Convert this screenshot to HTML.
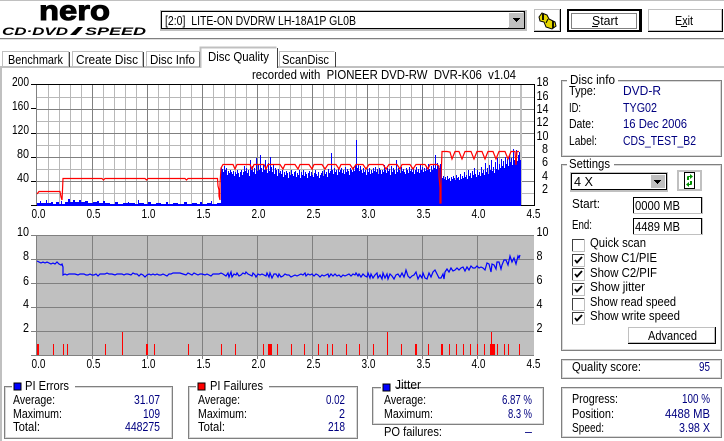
<!DOCTYPE html>
<html><head><meta charset="utf-8"><style>
html,body{margin:0;padding:0;background:#fff;width:724px;height:441px;overflow:hidden}
svg{display:block}
text{font-family:"Liberation Sans","IPAGothic",sans-serif;font-size:12.5px;fill:#000}
.v{fill:#000080}
.c{shape-rendering:crispEdges}
</style></head><body>
<svg width="724" height="441" viewBox="0 0 724 441" xmlns="http://www.w3.org/2000/svg">
<g class="c">
<rect x="0" y="0" width="724" height="1" fill="#c0c0c0"/>
<rect x="0" y="38" width="724" height="1" fill="#808080"/>
<rect x="0" y="39" width="724" height="1" fill="#e0e0e0"/>
<rect x="0" y="66" width="724" height="2" fill="#c0c0c0"/>
<rect x="0" y="66" width="2" height="375" fill="#c0c0c0"/>
</g>
<!-- logo -->
<text x="39" y="20" textLength="71" lengthAdjust="spacingAndGlyphs" style="font-size:28px;font-weight:bold;stroke:#000;stroke-width:1">nero</text>
<text x="2" y="35" textLength="66" lengthAdjust="spacingAndGlyphs" style="font-size:11px;font-weight:bold;font-style:italic">CD·DVD</text>
<path d="M70 35l8-8h5l-7 8z" fill="#000"/>
<text x="85" y="35" textLength="61" lengthAdjust="spacingAndGlyphs" style="font-size:11px;font-weight:bold;font-style:italic">SPEED</text>
<!-- drive combo -->
<g class="c">
<rect x="160" y="10" width="367" height="21" fill="#c0c0c0"/>
<rect x="161" y="11" width="364" height="18" fill="#000"/>
<rect x="162" y="12" width="362" height="16" fill="#fff"/>
<rect x="508" y="12" width="16" height="16" fill="#c0c0c0"/>
<rect x="508" y="12" width="15" height="15" fill="#fff"/>
<rect x="509" y="13" width="14" height="14" fill="#c0c0c0"/>
<path d="M513 18h7v1h-1v1h-1v1h-1v1h-1v-1h-1v-1h-1v-1h-1z" fill="#000"/>
</g>
<text x="165" y="25" textLength="191" lengthAdjust="spacingAndGlyphs">[2:0]&#160;&#160;LITE-ON DVDRW LH-18A1P GL0B</text>
<!-- top buttons -->
<g class="c">
<rect x="534" y="9" width="27" height="23" fill="#000"/>
<rect x="534" y="9" width="26" height="22" fill="#c0c0c0"/>
<rect x="535" y="10" width="24" height="20" fill="#fff"/>
<rect x="567" y="9" width="75" height="23" fill="#000"/>
<rect x="569" y="11" width="70" height="19" fill="#fff"/>
<rect x="648" y="9" width="75" height="23" fill="#000"/>
<rect x="648" y="9" width="74" height="22" fill="#c0c0c0"/>
<rect x="649" y="10" width="72" height="20" fill="#fff"/>
</g>
<rect x="571.5" y="13.5" width="65" height="15" fill="none" stroke="#000" stroke-width="1" stroke-dasharray="1 1" class="c"/>
<g>
<path d="M539 17l3-4 5 2 2 4 6 3 1 4-4 3-6-2-2-5-4-1z" fill="#e6d800" stroke="#000" stroke-width="1"/>
<path d="M543 14v6M553 21v7" stroke="#000" stroke-width="1.800"/>
<path d="M548 19l-2 4" stroke="#000" stroke-width="1"/>
</g>
<text x="592" y="25" textLength="26" lengthAdjust="spacingAndGlyphs">Start</text>
<rect x="592" y="26" width="6" height="1" class="c"/>
<text x="675" y="25" textLength="18" lengthAdjust="spacingAndGlyphs">Exit</text>
<rect x="681" y="26" width="6" height="1" class="c"/>
<!-- tabs -->
<g class="c" fill="none">
<path d="M2.500 67V51.500H68.500V67" stroke="#c0c0c0"/><path d="M69.500 52V67" stroke="#404040"/>
<path d="M72.500 67V51.500H142.500V67" stroke="#c0c0c0"/><path d="M143.500 52V67" stroke="#404040"/>
<path d="M146.500 67V51.500H199.500V67" stroke="#c0c0c0"/><path d="M199.500 52V67" stroke="#404040"/>
<rect x="201" y="48" width="76" height="21" fill="#fff" stroke="none"/>
<path d="M200.500 68V47.500H276.500" stroke="#c0c0c0" stroke-width="2"/><path d="M277.500 48V68" stroke="#404040"/>
<path d="M279.500 66V51.500H334.500" stroke="#c0c0c0"/><path d="M335.500 52V67" stroke="#404040"/>
</g>
<text x="8" y="64" textLength="55" lengthAdjust="spacingAndGlyphs">Benchmark</text>
<text x="76" y="64" textLength="62" lengthAdjust="spacingAndGlyphs">Create Disc</text>
<text x="150" y="64" textLength="45" lengthAdjust="spacingAndGlyphs">Disc Info</text>
<text x="208" y="61" textLength="61" lengthAdjust="spacingAndGlyphs">Disc Quality</text>
<text x="282" y="64" textLength="47" lengthAdjust="spacingAndGlyphs">ScanDisc</text>
<text x="252" y="79" textLength="264" lengthAdjust="spacingAndGlyphs">recorded with&#160;&#160;PIONEER DVD-RW&#160;&#160;DVR-K06&#160;&#160;v1.04</text>

<!-- chart 1 grid -->
<g class="c" fill="none">
<path d="M48.500 85V206M59.500 85V206M70.500 85V206M81.500 85V206M103.500 85V206M114.500 85V206M125.500 85V206M136.500 85V206M158.500 85V206M169.500 85V206M180.500 85V206M191.500 85V206M213.500 85V206M224.500 85V206M235.500 85V206M246.500 85V206M268.500 85V206M279.500 85V206M290.500 85V206M301.500 85V206M323.500 85V206M334.500 85V206M345.500 85V206M356.500 85V206M378.500 85V206M389.500 85V206M400.500 85V206M411.500 85V206M433.500 85V206M444.500 85V206M455.500 85V206M466.500 85V206M488.500 85V206M499.500 85V206M510.500 85V206M521.500 85V206M36 97.500H534M36 121.500H534M36 145.500H534M36 169.500H534M36 193.500H534" stroke="#b8b8b8"/>
<path d="M92.500 85V206M147.500 85V206M202.500 85V206M257.500 85V206M312.500 85V206M367.500 85V206M422.500 85V206M477.500 85V206M36 109.500H534M36 133.500H534M36 157.500H534M36 181.500H534" stroke="#808080"/>
<rect x="520" y="85" width="2" height="121" fill="#c0c0c0" stroke="none"/>
<path d="M36.500 85V206" stroke="#808080"/>
<path d="M36 84.500H534.500V206" stroke="#000"/>
<path d="M36 205.500H534" stroke="#000"/>
<path d="M31 84.500h5M31 108.500h5M31 133.500h5M31 157.500h5M31 181.500h5M31 205.500h5" stroke="#000"/>
</g>
<!-- blue low region -->
<path class="c" fill="#0000ff" d="M37 206V203h3V201h1V203h5V200h1V203h4V202h2V204h3V202h3V204h2V201h1V204h3V202h3V199h2V202h3V200h2V202h4V200h2V202h4V201h3V203h5V202h4V201h2V203h4V201h2V203h5V204h5V202h3V204h5V203h5V202h1V203h6V204h3V200h1V203h5V204h4V202h3V204h5V203h5V204h5V202h2V204h5V203h5V204h6V202h3V204h5V203h5V204h3V202h2V204h5V203h4V201h1V204h5V203h5V202h3V206z"/>
<!-- blue high region -->
<path class="c" fill="#0000ff" d="M221 206V167h1V169h1V172h1V166h1V170h1V168h1V175h1V171h1V173h1V170h1V172h1V174h1V171h1V176h1V172h1V174h1V170h1V173h1V177h1V172h1V170h1V175h1V172h1V166h1V171h1V168h1V173h1V170h1V176h1V160h1V170h1V166h1V172h1V168h1V174h1V158h1V171h1V165h1V170h1V155h1V168h1V172h1V164h1V170h1V160h1V169h1V173h1V163h1V171h1V157h1V167h1V172h1V165h1V174h1V168h1V170h1V176h1V169h1V173h1V171h1V174h1V170h1V177h1V172h1V175h1V171h1V173h1V178h1V172h1V175h1V170h1V174h1V176h1V172h1V171h1V177h1V173h1V175h1V170h1V178h1V172h1V175h1V170h1V176h1V172h1V174h1V178h1V173h1V171h1V176h1V172h1V175h1V177h1V173h1V170h1V174h1V176h1V172h1V178h1V175h1V173h1V171h1V176h1V170h1V174h1V172h1V177h1V169h1V173h1V171h1V153h1V170h1V174h1V168h1V172h1V170h1V175h1V169h1V172h1V170h1V168h1V173h1V170h1V174h1V167h1V172h1V169h1V171h1V175h1V168h1V170h1V172h1V167h1V171h1V165h1V140h1V168h1V164h1V171h1V166h1V170h1V173h1V168h1V172h1V170h1V175h1V169h1V172h1V168h1V174h1V170h1V173h1V168h1V171h1V167h1V172h1V169h1V174h1V168h1V170h1V174h1V170h1V172h1V165h1V170h1V173h1V168h1V171h1V169h1V175h1V166h1V172h1V168h1V170h1V174h1V160h1V172h1V168h1V170h1V173h1V167h1V171h1V169h1V172h1V174h1V168h1V170h1V173h1V167h1V171h1V169h1V172h1V168h1V174h1V170h1V167h1V172h1V169h1V173h1V165h1V170h1V167h1V172h1V168h1V171h1V166h1V170h1V164h1V169h1V172h1V166h1V170h1V165h1V168h1V155h1V169h1V163h1V166h1V168h1V164h1V170h1V178h1V176h1V179h1V177h1V180h1V176h1V179h1V178h1V181h1V177h1V179h1V176h1V178h1V180h1V175h1V178h1V177h1V180h1V174h1V179h1V176h1V178h1V172h1V177h1V175h1V179h1V170h1V176h1V173h1V178h1V171h1V175h1V168h1V174h1V177h1V170h1V175h1V172h1V176h1V167h1V173h1V170h1V175h1V163h1V172h1V168h1V174h1V165h1V170h1V160h1V171h1V167h1V173h1V162h1V169h1V158h1V170h1V164h1V168h1V159h1V166h1V161h1V168h1V157h1V164h1V159h1V166h1V155h1V162h1V158h1V165h1V149h1V160h1V156h1V150h1V161h1V155h1V152h1V160h1V206z"/>
<!-- red line -->
<path fill="none" stroke="#ff0000" stroke-width="1.200" d="M37 194L39 191.500H60L61 197L62 200L62.500 190L63 178.500H102L103.500 180L105 178.500H145L146.500 180L148 178.500H185L186.500 180L188 178.500H217.500L218 186L219 190V196L220 200V184L221 168L223 164.500H233L235 169L237 164.500H246L248 164.500H250L252 169L254 164.500H264L266 169L268 164.500H276L278 164.500H280L283 169L285 164.500H295L298 169L300 164.500H309L312 169L314 164.500H322L325 169L328 164.500H336L339 169L341 164.500H350L353 169L356 164.500H363L366 169L369 164.500H377L380 164.500H383L386 169L389 164.500H397L400 169L402 164.500H410L413 169L416 164.500H425L428 169L430 164.500H437L439 166V176L440 188V203L441 203V180L442 151.500H447L450 152L452 159L455 151.500H459L462 159L465 151.500H471L474 159L477 151.500H482L485 159L488 151.500H493L496 159L499 151.500H505L508 159L511 151.500H515L516 165L517 151.500H519"/>
<!-- chart 2 -->
<g class="c" fill="none">
<rect x="36" y="235" width="498" height="121" fill="#c0c0c0" stroke="none"/>
<path d="M36 235.500H534M36 259.500H534M36 283.500H534M36 307.500H534M36 331.500H534M92.500 235V359M147.500 235V359M202.500 235V359M257.500 235V359M312.500 235V359M367.500 235V359M422.500 235V359M477.500 235V359M36 355.500H534" stroke="#808080"/>
<path d="M31 235.500h5M31 259.500h5M31 283.500h5M31 307.500h5M31 331.500h5M31 355.500h5" stroke="#808080"/>
<path d="M36.500 235V356" stroke="#808080"/>
<path stroke="#ff0000" stroke-width="1" d="M53.500 344V355M63.500 344V355M67.500 344V355M105.500 344V355M154.500 344V355M188.500 344V355M221.500 344V355M235.500 344V355M263.500 344V355M277.500 344V355M291.500 344V355M304.500 344V355M318.500 344V355M327.500 344V355M332.500 344V355M346.500 344V355M359.500 344V355M373.500 344V355M401.500 344V355M428.500 344V355M449.500 344V355M456.500 344V355M463.500 344V355M470.500 344V355M477.500 344V355M484.500 344V355M497.500 344V355M504.500 344V355M508.500 344V355M519.500 344V355M122.500 332V355M387.500 332V355M491.500 332V355"/>
<path fill="#ff0000" stroke="none" d="M37 344h2v11h-2zM146 344h2v11h-2zM268 344h4v11h-4zM415 344h2v11h-2zM441 344h2v11h-2zM490 344h5v11h-5z"/>
</g>
<polyline fill="none" stroke="#0000ff" stroke-width="1.200" points="37,261 39,262 41,263 43,262 45,263 47,262 49,263 51,264 53,263 55,264 57,262 59,264 61,265 62,264 63,267 63,275 65,274 67,275 69,274 72,274 75,274 78,275 80,274 82,274 84,274 86,275 88,275 90,274 92,275 94,275 96,274 98,276 100,274 102,274 105,274 107,273 109,274 112,274 115,275 117,274 119,274 122,274 124,275 126,274 128,274 131,275 133,273 135,274 137,274 139,276 141,274 143,275 145,277 147,275 149,274 151,275 153,274 155,275 157,274 159,275 161,275 163,274 165,275 167,276 169,274 171,274 173,273 176,273 180,273 183,274 186,275 188,273 190,274 192,275 194,273 196,274 198,275 200,274 202,274 205,275 207,274 209,275 211,276 213,274 215,274 217,274 219,274 221,273 223,274 226,276 228,273 229,277 231,272 232,277 234,274 236,275 237,273 239,276 241,275 243,273 245,274 246,272 248,274 250,275 252,276 253,273 255,275 256,277 258,274 260,275 262,274 264,275 266,276 267,273 269,277 270,273 272,278 274,274 276,274 278,277 279,274 281,277 283,276 285,274 287,275 289,275 291,277 293,276 295,275 297,276 299,275 301,274 303,275 305,273 306,276 308,274 310,275 312,274 314,276 316,274 318,275 320,277 322,275 324,276 326,275 328,274 329,277 331,274 333,276 335,274 337,276 339,275 341,277 343,275 345,276 347,275 349,274 351,276 353,274 355,275 356,273 358,276 359,274 361,277 363,274 365,276 367,277 368,273 370,278 371,274 373,278 375,275 377,273 378,278 380,275 382,279 383,273 385,278 387,274 388,279 390,274 392,276 394,279 396,275 398,274 400,277 402,273 404,277 405,274 406,270 408,276 410,278 412,276 414,275 416,272 418,279 420,275 422,278 423,273 425,278 427,279 429,273 431,277 433,272 435,270 437,274 439,278 441,278 443,274 444,279 445,272 447,269 449,272 451,268 453,271 455,270 457,268 459,270 461,268 463,267 465,271 467,267 469,270 471,266 473,268 475,268 477,266 479,268 481,267 483,268 485,270 487,263 489,264 491,272 492,264 494,265 496,269 497,262 499,262 501,269 502,265 504,260 506,260 508,265 510,256 512,262 514,258 516,264 518,256 519,258 520,255"/>
<!-- axis labels -->
<g text-anchor="end">
<text x="29" y="86" textLength="17" lengthAdjust="spacingAndGlyphs">200</text><text x="29" y="110" textLength="17" lengthAdjust="spacingAndGlyphs">160</text><text x="29" y="134" textLength="17" lengthAdjust="spacingAndGlyphs">120</text><text x="29" y="158" textLength="12" lengthAdjust="spacingAndGlyphs">80</text><text x="29" y="182" textLength="12" lengthAdjust="spacingAndGlyphs">40</text>
<text x="29" y="236" textLength="12" lengthAdjust="spacingAndGlyphs">10</text><text x="29" y="260" textLength="6" lengthAdjust="spacingAndGlyphs">8</text><text x="29" y="285" textLength="6" lengthAdjust="spacingAndGlyphs">6</text><text x="29" y="308" textLength="6" lengthAdjust="spacingAndGlyphs">4</text><text x="29" y="332" textLength="6" lengthAdjust="spacingAndGlyphs">2</text>
</g>
<g>
<text x="536.500" y="86" textLength="12" lengthAdjust="spacingAndGlyphs">18</text><text x="536.500" y="100" textLength="12" lengthAdjust="spacingAndGlyphs">16</text><text x="536.500" y="113" textLength="12" lengthAdjust="spacingAndGlyphs">14</text><text x="536.500" y="126" textLength="12" lengthAdjust="spacingAndGlyphs">12</text><text x="536.500" y="140" textLength="12" lengthAdjust="spacingAndGlyphs">10</text><text x="542" y="153" textLength="6" lengthAdjust="spacingAndGlyphs">8</text><text x="542" y="166" textLength="6" lengthAdjust="spacingAndGlyphs">6</text><text x="542" y="180" textLength="6" lengthAdjust="spacingAndGlyphs">4</text><text x="542" y="193" textLength="6" lengthAdjust="spacingAndGlyphs">2</text>
<text x="536.500" y="236" textLength="12" lengthAdjust="spacingAndGlyphs">10</text><text x="536.500" y="260" textLength="6" lengthAdjust="spacingAndGlyphs">8</text><text x="536.500" y="284" textLength="6" lengthAdjust="spacingAndGlyphs">6</text><text x="536.500" y="308" textLength="6" lengthAdjust="spacingAndGlyphs">4</text><text x="536.500" y="332" textLength="6" lengthAdjust="spacingAndGlyphs">2</text>
</g>
<g text-anchor="middle">
<text x="38.500" y="218" textLength="14" lengthAdjust="spacingAndGlyphs">0.0</text><text x="93.500" y="218" textLength="14" lengthAdjust="spacingAndGlyphs">0.5</text><text x="148.500" y="218" textLength="14" lengthAdjust="spacingAndGlyphs">1.0</text><text x="203.500" y="218" textLength="14" lengthAdjust="spacingAndGlyphs">1.5</text><text x="258.500" y="218" textLength="14" lengthAdjust="spacingAndGlyphs">2.0</text><text x="313.500" y="218" textLength="14" lengthAdjust="spacingAndGlyphs">2.5</text><text x="368.500" y="218" textLength="14" lengthAdjust="spacingAndGlyphs">3.0</text><text x="423.500" y="218" textLength="14" lengthAdjust="spacingAndGlyphs">3.5</text><text x="478.500" y="218" textLength="14" lengthAdjust="spacingAndGlyphs">4.0</text><text x="533.500" y="218" textLength="14" lengthAdjust="spacingAndGlyphs">4.5</text>
<text x="38.500" y="368" textLength="14" lengthAdjust="spacingAndGlyphs">0.0</text><text x="93.500" y="368" textLength="14" lengthAdjust="spacingAndGlyphs">0.5</text><text x="148.500" y="368" textLength="14" lengthAdjust="spacingAndGlyphs">1.0</text><text x="203.500" y="368" textLength="14" lengthAdjust="spacingAndGlyphs">1.5</text><text x="258.500" y="368" textLength="14" lengthAdjust="spacingAndGlyphs">2.0</text><text x="313.500" y="368" textLength="14" lengthAdjust="spacingAndGlyphs">2.5</text><text x="368.500" y="368" textLength="14" lengthAdjust="spacingAndGlyphs">3.0</text><text x="423.500" y="368" textLength="14" lengthAdjust="spacingAndGlyphs">3.5</text><text x="478.500" y="368" textLength="14" lengthAdjust="spacingAndGlyphs">4.0</text><text x="533.500" y="368" textLength="14" lengthAdjust="spacingAndGlyphs">4.5</text>
</g>
<!-- group boxes -->
<g class="c" fill="none" stroke="#808080" stroke-width="1">
<rect x="561.500" y="80.500" width="160" height="76"/><rect x="562.500" y="81.500" width="158" height="74" stroke="#d8d8d8"/>
<rect x="561.500" y="164.500" width="160" height="186"/><rect x="562.500" y="165.500" width="158" height="184" stroke="#d8d8d8"/>
<rect x="561.500" y="359.500" width="160" height="19"/><rect x="562.500" y="360.500" width="158" height="17" stroke="#d8d8d8"/>
<rect x="561.500" y="387.500" width="160" height="50"/><rect x="562.500" y="388.500" width="158" height="48" stroke="#d8d8d8"/>
<rect x="4.500" y="386.500" width="168" height="52"/><rect x="5.500" y="387.500" width="166" height="50" stroke="#d8d8d8"/>
<rect x="188.500" y="386.500" width="169" height="52"/><rect x="189.500" y="387.500" width="167" height="50" stroke="#d8d8d8"/>
<rect x="372.500" y="387.500" width="171" height="37"/><rect x="373.500" y="388.500" width="169" height="35" stroke="#d8d8d8"/>
</g>
<g class="c" fill="#fff">
<rect x="567" y="78" width="51" height="6"/><rect x="567" y="162" width="47" height="6"/>
<rect x="12" y="384" width="63" height="6"/><rect x="196" y="384" width="73" height="6"/><rect x="381" y="385" width="16" height="5"/>
</g>
<!-- disc info -->
<text x="570" y="84" textLength="45" lengthAdjust="spacingAndGlyphs">Disc info</text>
<text x="569" y="95" textLength="27" lengthAdjust="spacingAndGlyphs">Type:</text><text x="623" y="95" textLength="38" lengthAdjust="spacingAndGlyphs" class="v">DVD-R</text>
<text x="569" y="112" textLength="12" lengthAdjust="spacingAndGlyphs">ID:</text><text x="623" y="112" textLength="34" lengthAdjust="spacingAndGlyphs" class="v">TYG02</text>
<text x="569" y="128" textLength="25" lengthAdjust="spacingAndGlyphs">Date:</text><text x="623" y="128" textLength="64" lengthAdjust="spacingAndGlyphs" class="v">16 Dec 2006</text>
<text x="569" y="145" textLength="28" lengthAdjust="spacingAndGlyphs">Label:</text><text x="623" y="145" textLength="73" lengthAdjust="spacingAndGlyphs" class="v">CDS_TEST_B2</text>
<!-- settings -->
<text x="569" y="168" textLength="41" lengthAdjust="spacingAndGlyphs">Settings</text>
<g class="c">
<rect x="570" y="172" width="98" height="20" fill="#c0c0c0"/>
<rect x="571" y="173" width="96" height="17" fill="#000"/>
<rect x="572" y="174" width="94" height="15" fill="#fff"/>
<rect x="650" y="174" width="16" height="15" fill="#fff"/>
<rect x="651" y="175" width="14" height="13" fill="#c0c0c0"/>
<path d="M654 180h7v1h-1v1h-1v1h-1v1h-1v-1h-1v-1h-1v-1h-1z" fill="#000"/>
<rect x="677" y="170" width="25" height="21" fill="#c0c0c0"/>
<rect x="679" y="172" width="21" height="17" fill="#fff"/>
<rect x="684" y="172" width="11" height="17" fill="#000"/>
<rect x="685" y="173" width="9" height="15" fill="#fff"/>
</g>
<path d="M687 180v-3q0-1 1-1h2v-2l3 2.500-3 2.500v-2h-1v3zM692 181v3q0 1-1 1h-2v2l-3-2.500 3-2.500v2h1v-3z" fill="#009000"/>
<text x="574" y="186" textLength="19" lengthAdjust="spacingAndGlyphs">4 X</text>
<text x="572" y="208" textLength="28" lengthAdjust="spacingAndGlyphs">Start:</text>
<text x="572" y="229" textLength="20" lengthAdjust="spacingAndGlyphs">End:</text>
<g class="c">
<rect x="633" y="197" width="70" height="17" fill="#c0c0c0"/><rect x="633" y="197" width="69" height="16" fill="#000"/><rect x="634" y="198" width="67" height="15" fill="#fff"/>
<rect x="633" y="218" width="70" height="17" fill="#c0c0c0"/><rect x="633" y="218" width="69" height="16" fill="#000"/><rect x="634" y="219" width="67" height="15" fill="#fff"/>
</g>
<text x="635" y="210" textLength="45" lengthAdjust="spacingAndGlyphs">0000 MB</text>
<text x="635" y="231" textLength="45" lengthAdjust="spacingAndGlyphs">4489 MB</text>
<!-- checkboxes -->
<g class="c">
<rect x="572" y="239" width="13" height="13" fill="#c0c0c0"/><rect x="572" y="239" width="12" height="12" fill="#404040"/><rect x="573" y="240" width="11" height="11" fill="#fff"/>
<rect x="572" y="254" width="13" height="13" fill="#c0c0c0"/><rect x="572" y="254" width="12" height="12" fill="#404040"/><rect x="573" y="255" width="11" height="11" fill="#fff"/>
<rect x="572" y="268" width="13" height="13" fill="#c0c0c0"/><rect x="572" y="268" width="12" height="12" fill="#404040"/><rect x="573" y="269" width="11" height="11" fill="#fff"/>
<rect x="572" y="283" width="13" height="13" fill="#c0c0c0"/><rect x="572" y="283" width="12" height="12" fill="#404040"/><rect x="573" y="284" width="11" height="11" fill="#fff"/>
<rect x="572" y="298" width="13" height="13" fill="#c0c0c0"/><rect x="572" y="298" width="12" height="12" fill="#404040"/><rect x="573" y="299" width="11" height="11" fill="#fff"/>
<rect x="572" y="312" width="13" height="13" fill="#c0c0c0"/><rect x="572" y="312" width="12" height="12" fill="#404040"/><rect x="573" y="313" width="11" height="11" fill="#fff"/>
</g>
<g fill="none" stroke="#000" stroke-width="1.800">
<path d="M575 260l2 2.500 5-5.500"/><path d="M575 274l2 2.500 5-5.500"/><path d="M575 289l2 2.500 5-5.500"/><path d="M575 318l2 2.500 5-5.500"/>
</g>
<text x="590" y="247" textLength="56" lengthAdjust="spacingAndGlyphs">Quick scan</text>
<text x="590" y="262" textLength="67" lengthAdjust="spacingAndGlyphs">Show C1/PIE</text>
<text x="590" y="277" textLength="67" lengthAdjust="spacingAndGlyphs">Show C2/PIF</text>
<text x="590" y="291" textLength="55" lengthAdjust="spacingAndGlyphs">Show jitter</text>
<text x="590" y="306" textLength="86" lengthAdjust="spacingAndGlyphs">Show read speed</text>
<text x="590" y="320" textLength="90" lengthAdjust="spacingAndGlyphs">Show write speed</text>
<g class="c">
<rect x="628" y="327" width="88" height="17" fill="#000"/><rect x="628" y="327" width="87" height="16" fill="#c0c0c0"/><rect x="629" y="328" width="85" height="14" fill="#fff"/>
</g>
<text x="648" y="340" textLength="49" lengthAdjust="spacingAndGlyphs">Advanced</text>
<!-- bottom -->
<g class="c"><rect x="14" y="383" width="7" height="7" fill="#0000ff" stroke="#000"/><rect x="198" y="383" width="7" height="7" fill="#ff0000" stroke="#000"/><rect x="383" y="384" width="7" height="7" fill="#0000ff" stroke="#000"/></g>
<text x="25" y="390" textLength="44" lengthAdjust="spacingAndGlyphs">PI Errors</text>
<text x="210" y="390" textLength="53" lengthAdjust="spacingAndGlyphs">PI Failures</text>
<text x="395" y="389" textLength="26" lengthAdjust="spacingAndGlyphs">Jitter</text>
<text x="13" y="404" textLength="42" lengthAdjust="spacingAndGlyphs">Average:</text><text x="13" y="418" textLength="49" lengthAdjust="spacingAndGlyphs">Maximum:</text><text x="13" y="431" textLength="27" lengthAdjust="spacingAndGlyphs">Total:</text>
<text x="198" y="404" textLength="42" lengthAdjust="spacingAndGlyphs">Average:</text><text x="198" y="418" textLength="49" lengthAdjust="spacingAndGlyphs">Maximum:</text><text x="198" y="431" textLength="27" lengthAdjust="spacingAndGlyphs">Total:</text>
<text x="384" y="404" textLength="42" lengthAdjust="spacingAndGlyphs">Average:</text><text x="384" y="418" textLength="49" lengthAdjust="spacingAndGlyphs">Maximum:</text><text x="384" y="436" textLength="58" lengthAdjust="spacingAndGlyphs">PO failures:</text>
<g text-anchor="end" class="v">
<text class="v" x="160" y="404" textLength="26" lengthAdjust="spacingAndGlyphs">31.07</text><text class="v" x="160" y="418" textLength="17" lengthAdjust="spacingAndGlyphs">109</text><text class="v" x="160" y="431" textLength="35" lengthAdjust="spacingAndGlyphs">448275</text>
<text class="v" x="345" y="404" textLength="19" lengthAdjust="spacingAndGlyphs">0.02</text><text class="v" x="345" y="418" textLength="6" lengthAdjust="spacingAndGlyphs">2</text><text class="v" x="345" y="431" textLength="17" lengthAdjust="spacingAndGlyphs">218</text>
<text class="v" x="532" y="404" textLength="30" lengthAdjust="spacingAndGlyphs">6.87 %</text><text class="v" x="532" y="418" textLength="24" lengthAdjust="spacingAndGlyphs">8.3 %</text><text class="v" x="532" y="436">–</text>
<text class="v" x="710" y="371" textLength="11" lengthAdjust="spacingAndGlyphs">95</text>
<text class="v" x="710" y="403" textLength="28" lengthAdjust="spacingAndGlyphs">100 %</text><text class="v" x="710" y="418" textLength="45" lengthAdjust="spacingAndGlyphs">4488 MB</text><text class="v" x="710" y="432" textLength="31" lengthAdjust="spacingAndGlyphs">3.98 X</text>
</g>
<text x="572" y="371" textLength="69" lengthAdjust="spacingAndGlyphs">Quality score:</text>
<text x="572" y="403" textLength="46" lengthAdjust="spacingAndGlyphs">Progress:</text>
<text x="572" y="418" textLength="42" lengthAdjust="spacingAndGlyphs">Position:</text>
<text x="572" y="432" textLength="32" lengthAdjust="spacingAndGlyphs">Speed:</text>
</svg>
</body></html>
